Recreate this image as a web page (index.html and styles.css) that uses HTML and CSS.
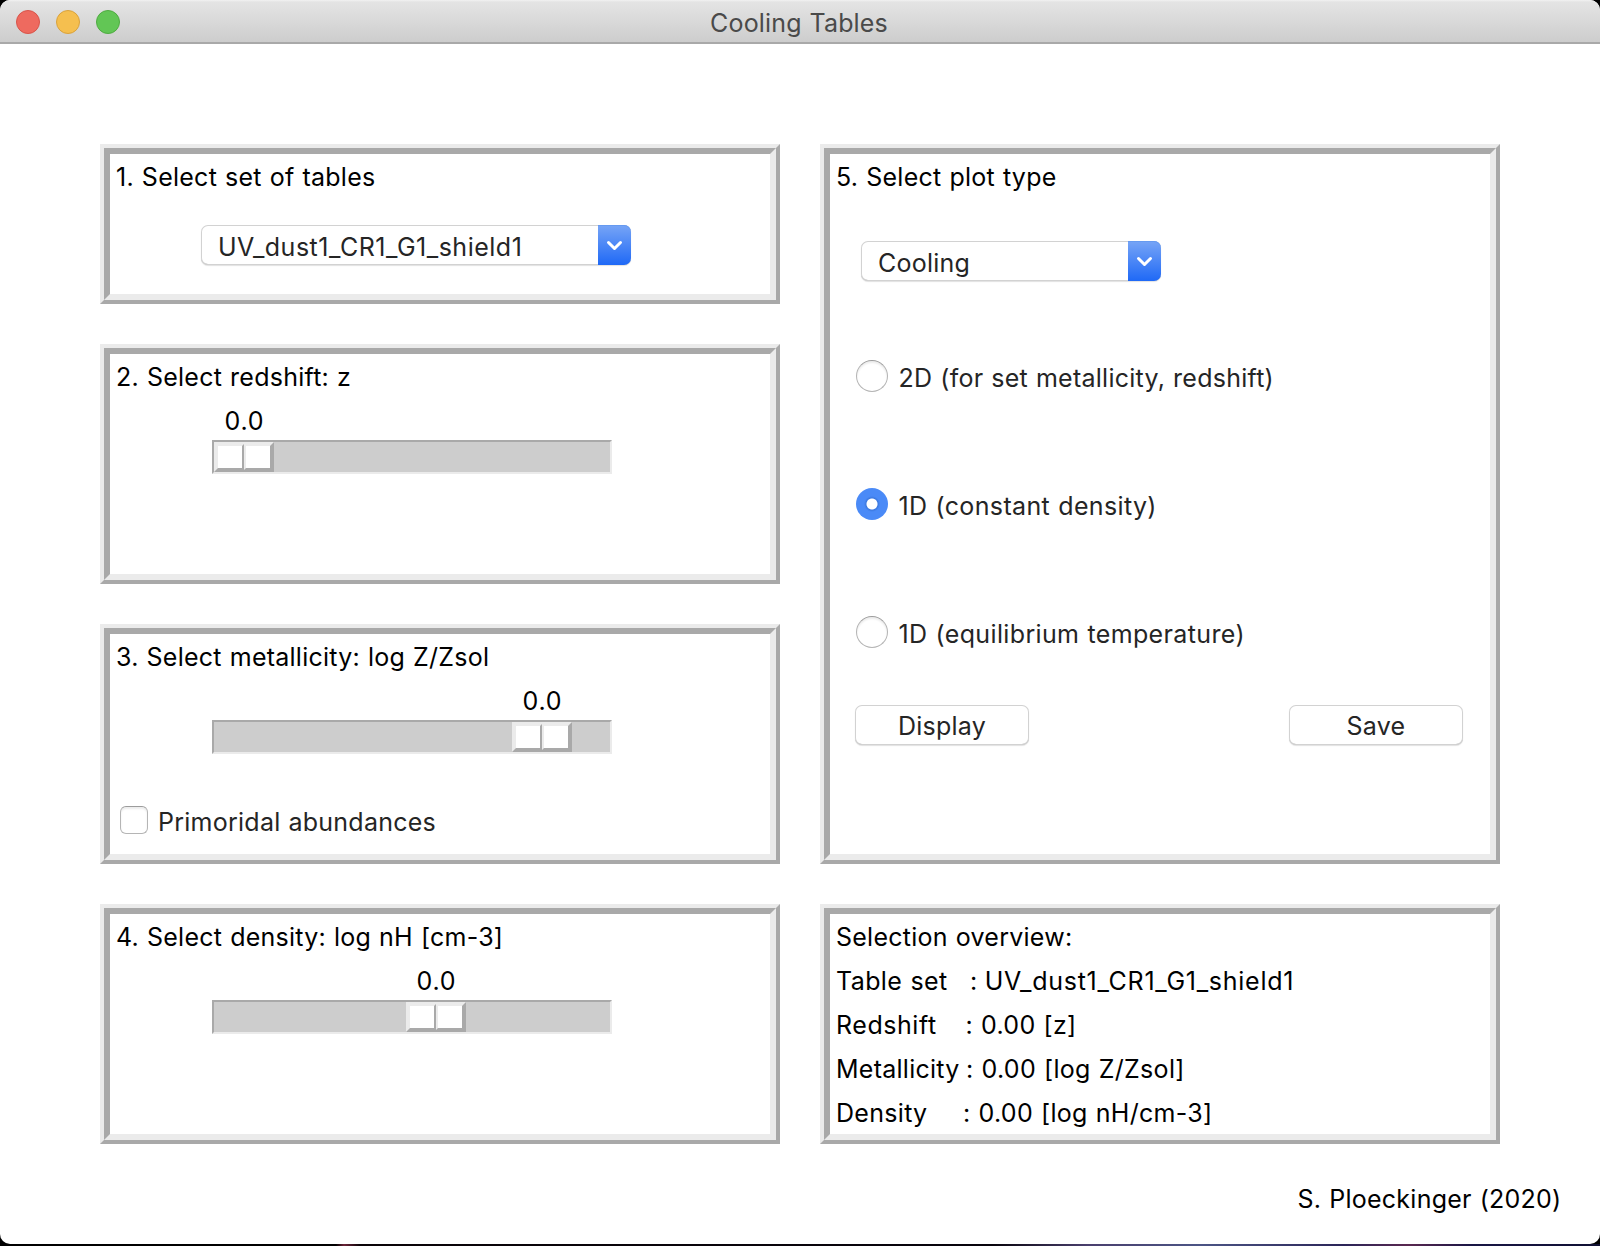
FILE: index.html
```html
<!DOCTYPE html>
<html lang="en">
<head>
<meta charset="utf-8">
<title>Cooling Tables</title>
<link rel="stylesheet" href="styles.css">
</head>
<body>
<div class="window">
  <header class="titlebar">
    <div class="lights"><span class="light close"></span><span class="light minimize"></span><span class="light maximize"></span></div>
    <h1 class="title">Cooling Tables</h1>
  </header>
  <main class="panels">
    <section class="panel">
      <div class="panel-body">
        <h2 class="heading">1. Select set of tables</h2>
        <div class="combo combo-tables">
          <span class="combo-text t-set">UV_dust1_CR1_G1_shield1</span>
          <span class="combo-arrow"><svg width="33" height="40" viewBox="0 0 33 40"><path d="M10.5 17.5l6 6 6-6"/></svg></span>
        </div>
      </div>
    </section>
    <section class="panel plot-panel">
      <div class="panel-body">
        <h2 class="heading">5. Select plot type</h2>
        <div class="combo combo-plot">
          <span class="combo-text">Cooling</span>
          <span class="combo-arrow"><svg width="33" height="40" viewBox="0 0 33 40"><path d="M10.5 17.5l6 6 6-6"/></svg></span>
        </div>
        <div class="radios">
          <div class="radio"><span class="dot"></span><span>2D (for set metallicity, redshift)</span></div>
          <div class="radio one-d"><span class="dot checked"></span><span>1D (constant density)</span></div>
          <div class="radio one-d"><span class="dot"></span><span>1D (equilibrium temperature)</span></div>
        </div>
        <div class="buttons">
          <div class="button">Display</div>
          <div class="button">Save</div>
        </div>
      </div>
    </section>
    <section class="panel">
      <div class="panel-body">
        <h2 class="heading">2. Select redshift: z</h2>
        <div class="scale" style="--pos: 0px">
          <div class="value">0.0</div>
          <div class="trough"><div class="thumb"><i></i><i></i></div></div>
        </div>
      </div>
    </section>
    <section class="panel">
      <div class="panel-body">
        <h2 class="heading">3. Select metallicity: log Z/Zsol</h2>
        <div class="scale" style="--pos: 298px">
          <div class="value">0.0</div>
          <div class="trough"><div class="thumb"><i></i><i></i></div></div>
        </div>
        <div class="check"><span class="box"></span><span>Primoridal abundances</span></div>
      </div>
    </section>
    <section class="panel">
      <div class="panel-body">
        <h2 class="heading">4. Select density: log nH [cm-3]</h2>
        <div class="scale" style="--pos: 192px">
          <div class="value">0.0</div>
          <div class="trough"><div class="thumb"><i></i><i></i></div></div>
        </div>
      </div>
    </section>
    <section class="panel">
      <div class="panel-body">
        <h2 class="heading">Selection overview:</h2>
        <p class="line"><span class="name n1">Table set</span><span class="v1">: UV_dust1_CR1_G1_shield1</span></p>
        <p class="line"><span class="name n2">Redshift</span><span>: 0.00 [z]</span></p>
        <p class="line"><span class="name n3">Metallicity</span><span>: 0.00 [log Z/Zsol]</span></p>
        <p class="line"><span class="name n4">Density</span><span>: 0.00 [log nH/cm-3]</span></p>
      </div>
    </section>
  </main>
  <footer class="credit"><span>S. Ploeckinger (2020)</span></footer>
</div>
</body>
</html>
```
FILE: styles.css
```css
* { box-sizing: border-box; margin: 0; padding: 0; }
html { background: #000; }
body {
  height: 1246px;
  overflow: hidden;
  font: 400 25px/44px Inter, "Liberation Sans", sans-serif;
  font-feature-settings: "calt" 0;
  letter-spacing: .25px;
  word-spacing: .7px;
  color: #000;
  white-space: nowrap;
  background: linear-gradient(90deg, #000 0 21%, #6d2338 21.5%, #0a0408 22.5%, #08040c 62%, #4a3f6e 68%, #4c5585 75%, #2b2558 84%, #5a2850 88%, #191645 92%, #101033) 0 1244px / 100% 2px no-repeat, #000;
}
.window {
  height: 1244px;
  background: #fff;
  border-radius: 10px;
  overflow: hidden;
}
.titlebar {
  display: grid;
  grid-template-columns: 1fr auto 1fr;
  height: 44px;
  background: linear-gradient(#f2f2f2 0, #e4e4e4 2px, #cdcdcd 42px);
  border-bottom: 2px solid #a9a9a9;
}
.lights { display: flex; gap: 16px; padding: 10px 0 0 16px; }
.light { width: 24px; height: 24px; border-radius: 50%; border: 1px solid; }
.close { background: #ee6a5f; border-color: #d8544a; }
.minimize { background: #f5bf4f; border-color: #d9a23c; }
.maximize { background: #62c655; border-color: #4fab41; }
.title { font-size: 25px; font-weight: 400; line-height: 46px; height: 42px; margin-right: 2px; letter-spacing: .15px; color: #4a4a4a; }

.panels {
  display: grid;
  grid-template-columns: 680px 680px;
  grid-template-rows: 160px 240px 240px 240px;
  gap: 40px;
  padding: 100px 100px 0;
}
.panel {
  grid-column: 1;
  border: 4px solid;
  border-color: #ebebeb #a9a9a9 #a9a9a9 #ebebeb;
}
.panel:last-child { grid-column: 2; grid-row: 4; }
.plot-panel { grid-column: 2; grid-row: 1 / span 3; }
.panel-body {
  height: 100%;
  padding-top: 1px;
  border: 6px solid;
  border-color: #a9a9a9 #ebebeb #ebebeb #a9a9a9;
}
.heading { font-size: 25px; font-weight: 400; padding-left: 6px; height: 44px; }

.combo {
  display: flex;
  justify-content: space-between;
  height: 40px;
  border-radius: 7px;
  background: #fff;
  color: #252525;
  box-shadow: inset 0 0 0 1px #d2d2d2, inset 0 -1px 0 #b9b9b9, 0 1px 1px rgba(0,0,0,.12);
}
.combo-tables { width: 430px; margin: 26px 0 0 91px; }
.combo-plot { width: 300px; margin: 42px 0 0 31px; }
.combo-text { padding-left: 17px; }
.t-set { letter-spacing: .51px; }
.combo-arrow {
  width: 33px;
  height: 40px;
  border-radius: 0 7px 7px 0;
  background: linear-gradient(#77a5f6, #1f69f6);
  box-shadow: inset 0 1px 0 #669af0;
}
.combo-arrow svg { display: block; }
.combo-arrow path { fill: none; stroke: #fff; stroke-width: 3; stroke-linecap: round; stroke-linejoin: round; }

.scale { width: 400px; margin-left: 102px; }
.value { width: 60px; height: 41px; margin-left: calc(var(--pos) + 2px); text-align: center; text-indent: .8px; letter-spacing: .8px; }
.trough {
  height: 34px;
  background: #cdcdcd;
  border: 2px solid;
  border-color: #a9a9a9 #ebebeb #ebebeb #a9a9a9;
}
.thumb { display: flex; width: 60px; height: 30px; margin-left: var(--pos); }
.thumb, .thumb i { border: 2px solid; border-color: #ebebeb #a9a9a9 #a9a9a9 #ebebeb; }
.thumb i { flex: 1; background: #fff; }

.check { display: flex; gap: 10px; height: 28px; margin: 52px 0 0 10px; line-height: 32px; color: #252525; }
.box, .dot { background: #fff; border: 1px solid #b5b5b5; border-top-color: #9c9c9c; box-shadow: inset 0 2px 2px #ececec; }
.box { width: 28px; height: 28px; border-radius: 6px; }
.radios { display: flex; flex-direction: column; gap: 96px; margin: 79px 0 0 26px; color: #252525; }
.radio { display: flex; gap: 10.5px; height: 32px; line-height: 36px; }
.one-d { letter-spacing: .36px; }
.dot { width: 32px; height: 32px; border-radius: 50%; }
.dot.checked {
  border: 0;
  background: radial-gradient(circle, #fff 5px, #3b78e0 6px, #4a8af7 8px);
  box-shadow: none;
}
.buttons { display: flex; justify-content: space-between; margin: 57px 27px 0 25px; }
.button {
  width: 174px;
  height: 40px;
  line-height: 42px;
  text-align: center;
  color: #252525;
  border-radius: 7px;
  box-shadow: inset 0 0 0 1px #d2d2d2, inset 0 -1px 0 #b9b9b9, 0 1px 1px rgba(0,0,0,.12);
}
.line { display: flex; height: 44px; padding-left: 6px; letter-spacing: .3px; }
.n1 { width: 134px; letter-spacing: .4px; }
.n2 { width: 129.5px; letter-spacing: .55px; }
.n3 { width: 130px; letter-spacing: .26px; }
.n4 { width: 127px; }
.v1 { letter-spacing: .73px; word-spacing: -1px; }
.credit { display: flex; justify-content: flex-end; padding: 33px 38.5px 0 0; }
```
